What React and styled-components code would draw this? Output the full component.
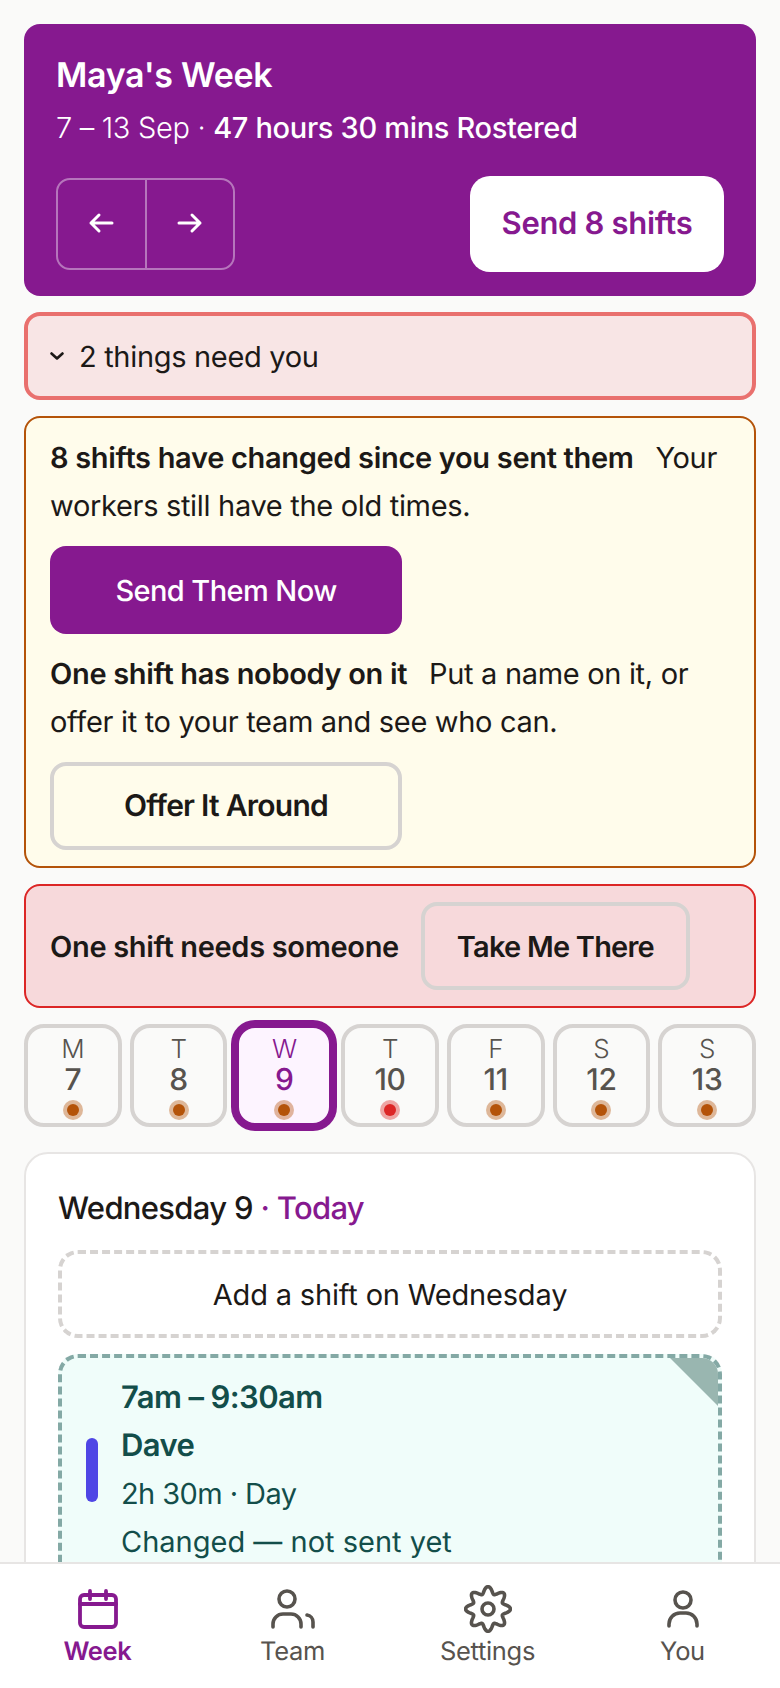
import styled, { createGlobalStyle } from 'styled-components';

const PURPLE = '#86198f';
const FONT = 'Inter, "Noto Sans", sans-serif';

const GlobalStyle = createGlobalStyle`
  * { box-sizing: border-box; }
  body {
    margin: 0;
    background: #fafaf9;
    font-family: ${FONT};
    color: #1c1917;
    letter-spacing: -0.02em;
    text-rendering: geometricPrecision;
  }
  button { font-family: inherit; letter-spacing: inherit; text-rendering: inherit; }
`;

const Screen = styled.div`
  width: 780px;
  height: 1688px;
  display: flex;
  flex-direction: column;
  overflow: hidden;
`;

const Scroll = styled.main`
  flex: 1;
  min-height: 0;
  overflow: hidden;
  padding: 24px 24px 0;
  display: flex;
  flex-direction: column;
`;

const Header = styled.header`
  flex: none;
  height: 272px;
  background: ${PURPLE};
  border-radius: 16px;
  padding: 33px 32px 24px;
  color: #fff;
`;

const Title = styled.h1`
  margin: 0;
  font-size: 34px;
  line-height: 38px;
  font-weight: 600;
`;

const Sub = styled.p`
  margin: 13px 0 0;
  font-size: 29px;
  line-height: 40px;
  font-weight: 300;
  strong { font-weight: 500; }
`;

const HeadRow = styled.div`
  margin-top: 28px;
  display: flex;
  align-items: center;
  justify-content: space-between;
`;

const Arrows = styled.div`
  display: flex;
  width: 179px;
  height: 92px;
  border: 2px solid rgba(255, 255, 255, 0.4);
  border-radius: 14px;
`;

const ArrowBtn = styled.button`
  flex: 1;
  background: none;
  border: 0;
  color: #fff;
  padding: 0 0 2px;
  display: flex;
  align-items: center;
  justify-content: center;
  & + & { border-left: 2px solid rgba(255, 255, 255, 0.4); }
`;

const SendBtn = styled.button`
  width: 254px;
  height: 96px;
  padding: 0 0 2px;
  border: 0;
  border-radius: 20px;
  background: #fff;
  color: ${PURPLE};
  font-size: 31px;
  font-weight: 600;
`;

const Attention = styled.div`
  flex: none;
  margin-top: 16px;
  height: 88px;
  border: 4px solid #e9706e;
  border-radius: 16px;
  background: #f8e5e5;
  padding: 0 22px;
  display: flex;
  align-items: center;
  gap: 15px;
  font-size: 29px;
`;

const Notes = styled.section`
  flex: none;
  margin-top: 16px;
  border: 2px solid #b45309;
  border-radius: 16px;
  background: #fffceb;
  padding: 16px 24px;
`;

const NoteText = styled.p`
  margin: 0 0 16px;
  font-size: 29px;
  line-height: 48px;
  font-weight: 400;
  strong { font-weight: 600; margin-right: 14px; }
`;

const ActionBtn = styled.button`
  display: block;
  width: 352px;
  height: 88px;
  border-radius: 16px;
  font-size: ${(p) => (p.$primary ? 29 : 30)}px;
  font-weight: ${(p) => (p.$primary ? 500 : 600)};
  letter-spacing: ${(p) => (p.$primary ? '-0.02em' : '-0.025em')};
  color: ${(p) => (p.$primary ? '#fff' : '#1c1917')};
  background: ${(p) => (p.$primary ? PURPLE : 'transparent')};
  border: ${(p) => (p.$primary ? '0' : '4px solid #d6d3d1')};
  margin-bottom: ${(p) => (p.$primary ? '16px' : '0')};
`;

const Alert = styled.section`
  flex: none;
  margin-top: 16px;
  border: 2px solid #dc2626;
  border-radius: 16px;
  background: #f7d9db;
  padding: 16px 24px;
  display: flex;
  align-items: center;
  gap: 22px;
  font-size: 29px;
  font-weight: 600;
`;

const ThereBtn = styled.button`
  width: 269px;
  height: 88px;
  border: 4px solid #d6d3d1;
  border-radius: 16px;
  background: transparent;
  color: #1c1917;
  font-size: 29px;
  font-weight: 600;
  letter-spacing: -0.027em;
`;

const Days = styled.div`
  flex: none;
  margin-top: 16px;
  display: grid;
  grid-template-columns: repeat(7, 1fr);
  gap: 8px;
`;

const Day = styled.button`
  height: 103px;
  padding: 9px 0 0;
  border: 4px solid ${(p) => (p.$active ? PURPLE : '#d6d3d1')};
  box-shadow: ${(p) => (p.$active ? `0 0 0 4px ${PURPLE}` : 'none')};
  border-radius: 20px;
  background: ${(p) => (p.$active ? '#fdf4ff' : 'transparent')};
  color: ${(p) => (p.$active ? PURPLE : '#57534e')};
  display: flex;
  flex-direction: column;
  align-items: center;
`;

const DayLetter = styled.span`
  font-size: 26px;
  line-height: 26px;
  font-weight: 300;
`;

const DayNum = styled.span`
  font-size: 30px;
  line-height: 34px;
  font-weight: 500;
`;

const Dot = styled.span`
  width: 12px;
  height: 12px;
  margin-top: 7px;
  border-radius: 50%;
  background: ${(p) => (p.$red ? '#dc2626' : '#b45309')};
  box-shadow: 0 0 0 4px ${(p) => (p.$red ? 'rgba(220, 38, 38, 0.4)' : 'rgba(180, 83, 9, 0.4)')};
`;

const DayCard = styled.section`
  flex: none;
  margin-top: 25px;
  border: 2px solid #e7e5e4;
  border-radius: 24px;
  background: #fff;
  padding: 32px;
`;

const DayTitle = styled.h2`
  margin: 0 0 18px;
  font-size: 31px;
  line-height: 46px;
  font-weight: 500;
  letter-spacing: -0.022em;
  span { color: ${PURPLE}; }
`;

const AddBtn = styled.button`
  display: block;
  width: 100%;
  height: 88px;
  border: 4px dashed #d6d3d1;
  border-radius: 20px;
  background: transparent;
  color: #1c1917;
  font-size: 29px;
  font-weight: 400;
  letter-spacing: -0.006em;
`;

const Shift = styled.article`
  position: relative;
  margin-top: 16px;
  border: 4px dashed #84a9a5;
  border-radius: 20px;
  background: #f0fdfa;
  padding: 16px 24px;
  display: flex;
  align-items: center;
  gap: 23px;
  color: #134e4a;
  overflow: hidden;
`;

const Corner = styled.span`
  position: absolute;
  top: 0;
  right: 0;
  width: 48px;
  height: 48px;
  background: #99b6b0;
  clip-path: polygon(0 0, 100% 0, 100% 100%);
`;

const Bar = styled.span`
  flex: none;
  width: 12px;
  height: 64px;
  border-radius: 6px;
  background: #4f46e5;
`;

const ShiftLine = styled.div`
  font-size: ${(p) => p.$size || 29}px;
  line-height: 48px;
  font-weight: ${(p) => p.$weight || 400};
  letter-spacing: ${(p) => p.$spacing || '-0.02em'};
`;

const Nav = styled.nav`
  flex: none;
  height: 126px;
  border-top: 2px solid #e7e5e4;
  background: #fff;
  display: grid;
  grid-template-columns: repeat(4, 1fr);
`;

const Tab = styled.a`
  display: flex;
  flex-direction: column;
  align-items: center;
  color: ${(p) => (p.$active ? PURPLE : '#57534e')};
  font-size: 25.5px;
  line-height: 32px;
  font-weight: ${(p) => (p.$active ? 600 : 400)};
`;

const TabIcon = styled.span`
  height: 72px;
  padding-top: 18px;
  display: flex;
  align-items: center;
`;

const ArrowIcon = ({ flip }) => (
  <svg width="26" height="22" viewBox="0 0 26 22" fill="none" stroke="currentColor" strokeWidth="3" strokeLinecap="round" strokeLinejoin="round" style={flip ? { transform: 'scaleX(-1)' } : undefined}>
    <path d="M24 11H3M11 3 3 11l8 8" />
  </svg>
);

const CalendarIcon = () => (
  <svg width="40" height="40" viewBox="0 0 40 40" fill="none" stroke="currentColor" strokeWidth="3.8" strokeLinecap="round" strokeLinejoin="round">
    <rect x="2" y="6" width="36" height="32" rx="4" />
    <path d="M2 15h36M12 2v8M28 2v8" />
  </svg>
);

const TeamIcon = () => (
  <svg width="44" height="40" viewBox="0 0 44 40" fill="none" stroke="currentColor" strokeWidth="3.6" strokeLinecap="round" strokeLinejoin="round">
    <circle cx="16" cy="10" r="8" />
    <path d="M2 38v-3a10 10 0 0 1 10-10h8a10 10 0 0 1 10 10v3M36 26a7 7 0 0 1 6 7v5" />
  </svg>
);

const YouIcon = () => (
  <svg width="32" height="38" viewBox="0 0 32 38" fill="none" stroke="currentColor" strokeWidth="3.6" strokeLinecap="round" strokeLinejoin="round">
    <circle cx="16" cy="10" r="8" />
    <path d="M2 36v-2a11 11 0 0 1 11-11h6a11 11 0 0 1 11 11v2" />
  </svg>
);

// wavy gear outline, 8 lobes on the axes and diagonals
const gearPath = Array.from({ length: 180 }, (_, i) => {
  const a = (i * 2 * Math.PI) / 180;
  const r = 19 + 3.4 * Math.cos(8 * a);
  return `${(24 + r * Math.cos(a)).toFixed(2)} ${(24 + r * Math.sin(a)).toFixed(2)}`;
}).join('L');

const GearIcon = () => (
  <svg width="48" height="48" viewBox="0 0 48 48" fill="none" stroke="currentColor" strokeWidth="3.6" strokeLinejoin="round">
    <path d={`M${gearPath}Z`} />
    <circle cx="24" cy="24" r="6" />
  </svg>
);

const ChevronIcon = () => (
  <svg width="14" height="8" viewBox="0 0 14 8" fill="none" stroke="#1c1917" strokeWidth="2.6" strokeLinecap="round" strokeLinejoin="round">
    <path d="M1.500 1.500 7 6.500l5.500-5" />
  </svg>
);

const week = [
  ['M', 7], ['T', 8], ['W', 9, 'active'], ['T', 10, 'red'], ['F', 11], ['S', 12], ['S', 13],
];

export default function App() {
  return (
    <Screen>
      <GlobalStyle />
      <Scroll>
        <Header>
          <Title>Maya's Week</Title>
          <Sub>7 – 13 Sep · <strong>47 hours 30 mins Rostered</strong></Sub>
          <HeadRow>
            <Arrows>
              <ArrowBtn><ArrowIcon /></ArrowBtn>
              <ArrowBtn><ArrowIcon flip /></ArrowBtn>
            </Arrows>
            <SendBtn>Send 8 shifts</SendBtn>
          </HeadRow>
        </Header>

        <Attention><ChevronIcon />2 things need you</Attention>

        <Notes>
          <NoteText><strong>8 shifts have changed since you sent them</strong> Your workers still have the old times.</NoteText>
          <ActionBtn $primary>Send Them Now</ActionBtn>
          <NoteText><strong>One shift has nobody on it</strong> Put a name on it, or offer it to your team and see who can.</NoteText>
          <ActionBtn>Offer It Around</ActionBtn>
        </Notes>

        <Alert>
          One shift needs someone
          <ThereBtn>Take Me There</ThereBtn>
        </Alert>

        <Days>
          {week.map(([letter, num, state]) => (
            <Day key={num} $active={state === 'active'}>
              <DayLetter>{letter}</DayLetter>
              <DayNum>{num}</DayNum>
              <Dot $red={state === 'red'} />
            </Day>
          ))}
        </Days>

        <DayCard>
          <DayTitle>Wednesday 9 <span>· Today</span></DayTitle>
          <AddBtn>Add a shift on Wednesday</AddBtn>
          <Shift>
            <Corner />
            <Bar />
            <div>
              <ShiftLine $size={31} $weight={600}>7am – 9:30am</ShiftLine>
              <ShiftLine $size={31} $weight={600}>Dave</ShiftLine>
              <ShiftLine>2h 30m · Day</ShiftLine>
              <ShiftLine $spacing="0em">Changed — not sent yet</ShiftLine>
            </div>
          </Shift>
        </DayCard>
      </Scroll>

      <Nav>
        <Tab $active><TabIcon><CalendarIcon /></TabIcon>Week</Tab>
        <Tab><TabIcon><TeamIcon /></TabIcon>Team</Tab>
        <Tab><TabIcon><GearIcon /></TabIcon>Settings</Tab>
        <Tab><TabIcon><YouIcon /></TabIcon>You</Tab>
      </Nav>
    </Screen>
  );
}
